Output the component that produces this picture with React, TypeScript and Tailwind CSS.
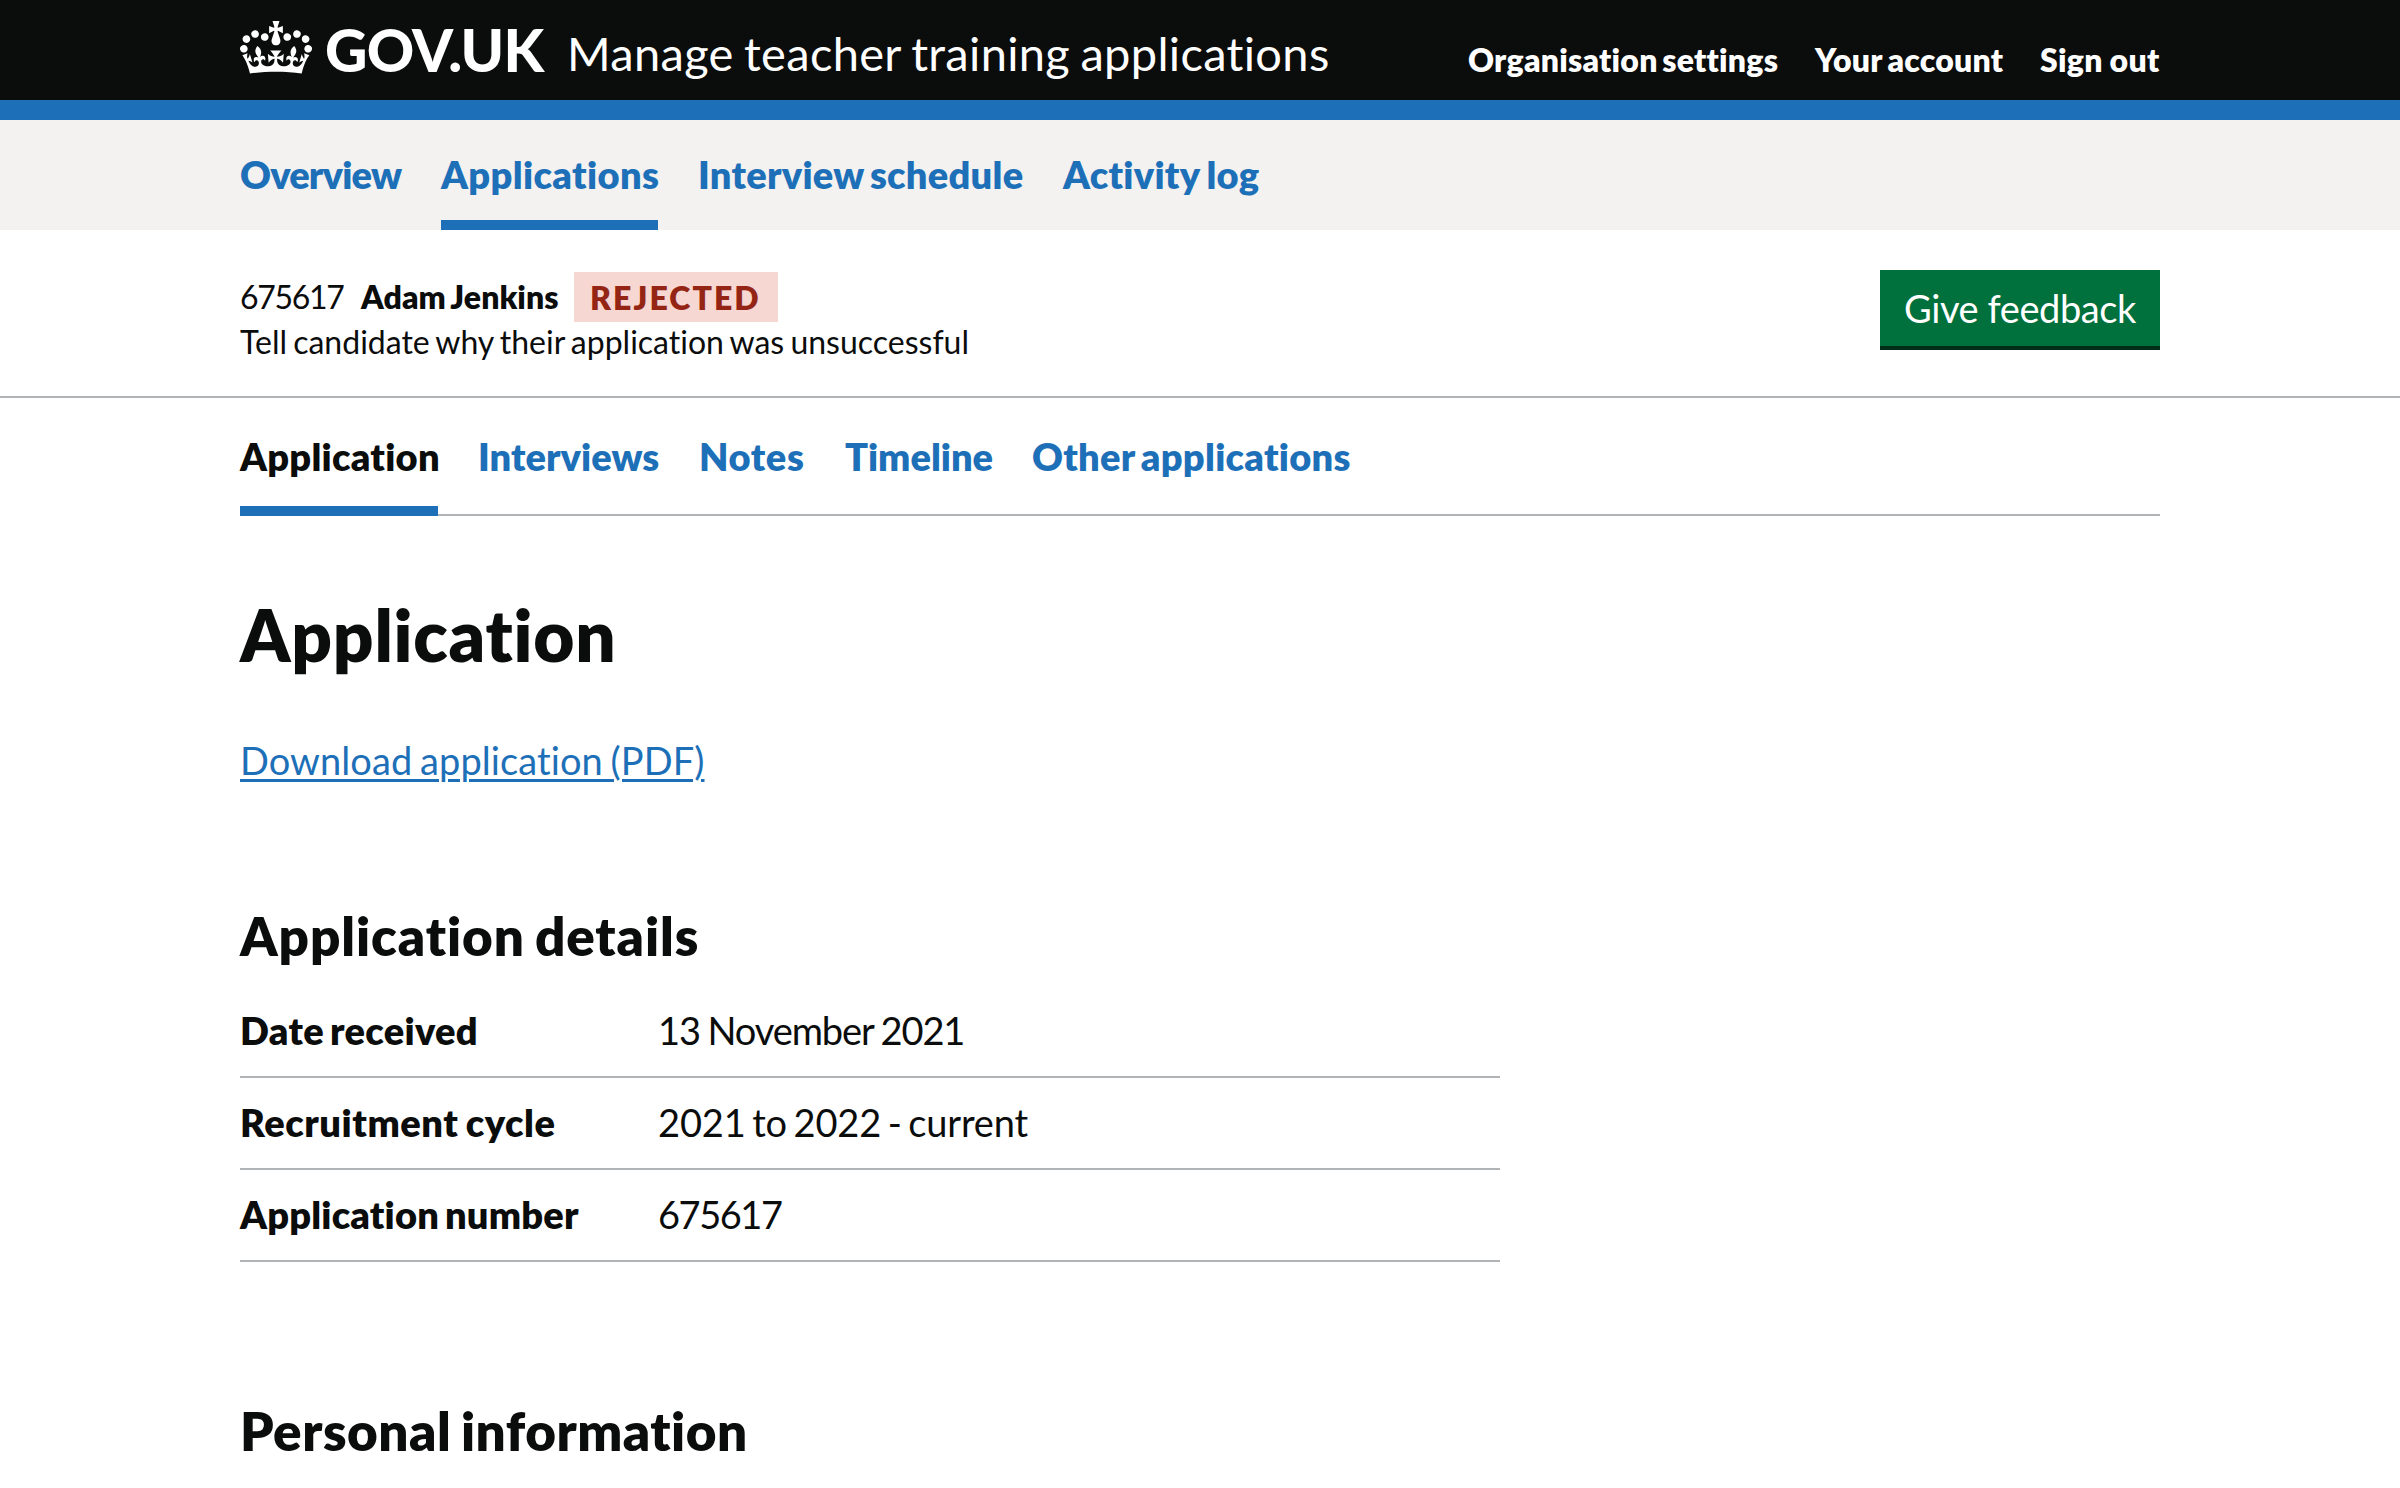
type NavItem = { label: string; style: string; active?: boolean };

const accountLinks: NavItem[] = [
  { label: "Organisation settings", style: "w-[310px] tracking-[0.24px] [word-spacing:-3px]" },
  { label: "Your account", style: "w-[188px] tracking-[0.2px] [word-spacing:-2px]" },
  { label: "Sign out", style: "w-[120px] tracking-[0.3px] [word-spacing:-1px]" },
];

const primaryLinks: NavItem[] = [
  { label: "Overview", style: "w-[161px] tracking-[-0.8px]" },
  { label: "Applications", style: "w-[217px] tracking-[0.35px]", active: true },
  { label: "Interview schedule", style: "w-[325px] tracking-[0.27px] [word-spacing:-3px]" },
  { label: "Activity log", style: "w-[196px] tracking-[0.25px] [word-spacing:-2px]" },
];

const tabs: NavItem[] = [
  { label: "Application", style: "w-[198px] tracking-[0.25px]", active: true },
  { label: "Interviews", style: "w-[181px] tracking-[0.05px]" },
  { label: "Notes", style: "w-[106px] tracking-[0.6px]" },
  { label: "Timeline", style: "w-[147px] tracking-[0px]" },
  { label: "Other applications", style: "w-[320px] tracking-[0.27px] [word-spacing:-3px]" },
];

const details = [
  { term: "Date received", termStyle: "tracking-[0.3px] [word-spacing:-3px]", value: "13 November 2021", valueStyle: "tracking-[-1.1px] [word-spacing:-1px]" },
  { term: "Recruitment cycle", termStyle: "tracking-[0.55px] [word-spacing:-2px]", value: "2021 to 2022 - current", valueStyle: "tracking-[-0.15px] [word-spacing:-3px]" },
  { term: "Application number", termStyle: "tracking-[0.18px] [word-spacing:-3px]", value: "675617", valueStyle: "tracking-[-1.45px]" },
];

function Crown() {
  return (
    <svg viewBox="0 0 132 97" className="h-[53px] w-[72px] shrink-0" fill="currentColor" aria-hidden="true">
      <path
        fillRule="evenodd"
        d="M25 30.2c3.5 1.5 7.7-.2 9.1-3.7 1.5-3.6-.2-7.8-3.9-9.2-3.6-1.4-7.6.3-9.1 3.9-1.4 3.5.3 7.5 3.9 9zM9 39.5c3.6 1.5 7.8-.2 9.2-3.7 1.5-3.6-.2-7.8-3.9-9.1-3.6-1.5-7.6.2-9.1 3.8-1.4 3.5.3 7.5 3.8 9zM4.4 57.2c3.5 1.5 7.7-.2 9.1-3.8 1.5-3.6-.2-7.7-3.9-9.1-3.5-1.5-7.6.3-9.1 3.8-1.4 3.5.3 7.6 3.9 9.1zm38.3-21.4c3.5 1.5 7.7-.2 9.1-3.8 1.5-3.6-.2-7.7-3.9-9.1-3.6-1.5-7.6.3-9.1 3.8-1.3 3.6.4 7.7 3.9 9.1zm64.4-5.6c-3.6 1.5-7.8-.2-9.1-3.7-1.5-3.6.2-7.8 3.8-9.2 3.6-1.4 7.7.3 9.2 3.9 1.3 3.5-.4 7.5-3.9 9zm15.9 9.3c-3.6 1.5-7.7-.2-9.1-3.7-1.5-3.6.2-7.8 3.7-9.1 3.6-1.5 7.7.2 9.2 3.8 1.5 3.5-.3 7.5-3.8 9zm4.7 17.7c-3.6 1.5-7.8-.2-9.2-3.8-1.5-3.6.2-7.7 3.9-9.1 3.6-1.5 7.7.3 9.2 3.8 1.3 3.5-.4 7.6-3.9 9.1zM89.3 35.8c-3.6 1.5-7.8-.2-9.2-3.8-1.4-3.6.2-7.7 3.9-9.1 3.6-1.5 7.7.3 9.2 3.8 1.4 3.6-.3 7.7-3.9 9.1zM69.7 17.7l8.9 4.7V9.3l-8.9 2.8c-.2-.3-.5-.6-.9-.9L72.4 0H59.6l3.5 11.2c-.3.3-.6.5-.9.9l-8.8-2.8v13.1l8.8-4.7c.3.3.6.7.9.9l-5 15.4v.1c-.2.8-.4 1.6-.4 2.4 0 4.1 3.1 7.5 7 8.1h.2c.3 0 .7.1 1 .1.4 0 .7 0 1-.1h.2c4-.6 7.1-4.1 7.1-8.1 0-.8-.1-1.7-.4-2.4V34l-5.1-15.4c.4-.2.7-.6 1-.9zM66 92.8c16.9 0 32.8 1.1 47.1 3.2 4-16.9 8.9-26.7 14-33.5l-9.6-3.4c1 4.9 1.1 7.2 0 10.2-1.5-1.4-3-4.3-4.2-8.7L108.6 76c2.8-2 5-3.2 7.5-3.3-4.4 9.4-10 11.9-13.6 11.2-4.3-.8-6.3-4.6-5.6-7.9 1-4.7 5.7-5.9 8-.5 4.3-8.7-3-11.4-7.6-8.8 7.1-7.2 7.9-13.5 2.1-21.1-8 6.1-8.1 12.3-4.5 20.8-4.7-5.4-12.1-2.5-9.5 6.2 3.4-5.2 7.9-2 7.2 3.1-.6 4.3-6.4 7.8-13.5 7.2-10.3-.9-10.9-8-11.2-13.8 2.5-.5 7.1 1.8 11 7.3L80.2 60c-4.1 4.4-8 5.3-12.3 5.4 1.4-4.4 8-11.6 8-11.6H55.5s6.4 7.2 7.9 11.6c-4.2-.1-8-1-12.3-5.4l1.4 16.4c3.9-5.5 8.5-7.7 10.9-7.3-.3 5.8-.9 12.8-11.1 13.8-7.2.6-12.9-2.9-13.5-7.2-.7-5 3.8-8.3 7.1-3.1 2.7-8.7-4.6-11.6-9.4-6.2 3.7-8.5 3.6-14.7-4.6-20.8-5.8 7.6-5 13.9 2.2 21.1-4.7-2.6-11.9.1-7.7 8.8 2.3-5.5 7.1-4.2 8.1.5.7 3.3-1.3 7.1-5.7 7.9-3.5.7-9-1.8-13.5-11.2 2.5.1 4.7 1.3 7.5 3.3l-4.7-15.4c-1.2 4.4-2.7 7.2-4.3 8.7-1.1-3-.9-5.3 0-10.2l-9.5 3.4c5 6.9 9.9 16.7 14 33.5 14.8-2.1 30.8-3.2 47.7-3.2z"
      />
    </svg>
  );
}

function Header() {
  return (
    <header className="h-[120px] border-b-[20px] border-[#1d70b8] bg-[#0b0c0c] text-white">
      <div className="mx-auto flex h-[100px] w-[1920px] items-start">
        <a className="flex pt-[21px]">
          <Crown />
          <span className="-mt-[2px] ml-[13px] w-[224px] text-[58.6px] leading-[60px] font-black tracking-[-0.75px]">GOV.UK</span>
        </a>
        <a className="mt-[23px] ml-[18px] text-[47px] leading-[60px] tracking-[0.32px] [word-spacing:-2px]">Manage teacher training applications</a>
        <nav className="mt-[40px] ml-auto flex gap-[37px] text-[32px] leading-[40px] font-extrabold">
          {accountLinks.map((l) => (
            <a key={l.label} className={l.style}>{l.label}</a>
          ))}
        </nav>
      </div>
    </header>
  );
}

function PrimaryNavigation() {
  return (
    <nav className="h-[110px] bg-[#f3f2f1]">
      <div className="mx-auto flex h-full w-[1920px] gap-[40px] text-[38px] leading-[50px] font-extrabold text-[#1d70b8]">
        {primaryLinks.map((l) => (
          <a key={l.label} className={`${l.style} border-b-[10px] pt-[29px] ${l.active ? "border-[#1d70b8]" : "border-transparent"}`}>
            {l.label}
          </a>
        ))}
      </div>
    </nav>
  );
}

function StatusBar() {
  return (
    <section className="h-[168px] border-b-2 border-[#b1b4b6]">
      <div className="mx-auto flex w-[1920px] items-start justify-between pt-[40px]">
        <div className="pt-[2px] text-[32px]">
          <div className="flex h-[50px] items-center leading-[52px]">
            <span className="w-[121px] tracking-[-1.3px]">675617</span>
            <span className="w-[213px] font-extrabold tracking-[0.05px] [word-spacing:-2px]">Adam Jenkins</span>
            <strong className="h-[50px] w-[204px] bg-[#f6d7d2] pl-[16px] font-extrabold tracking-[2.05px] text-[#942514]">REJECTED</strong>
          </div>
          <p className="leading-[40px] tracking-[0px] [font-variant-ligatures:none] [word-spacing:-2px]">Tell candidate why their application was unsuccessful</p>
        </div>
        <button className="h-[80px] w-[280px] border-b-4 border-[#002d18] bg-[#00703c] pb-[1px] text-[38px] leading-[50px] tracking-[-0.42px] text-white">
          Give feedback
        </button>
      </div>
    </section>
  );
}

function Tabs() {
  return (
    <nav className="mt-[32px] flex h-[86px] gap-[40px] text-[38px] leading-[52px] font-extrabold shadow-[inset_0_-2px_0_#b1b4b6]">
      {tabs.map((t) => (
        <a
          key={t.label}
          className={`${t.style} ${t.active ? "border-b-[10px] border-[#1d70b8] text-[#0b0c0c]" : "text-[#1d70b8]"}`}
        >
          {t.label}
        </a>
      ))}
    </nav>
  );
}

export default function App() {
  return (
    <div className="h-[1488px] w-[2400px] overflow-hidden bg-white font-[Lato,'Noto_Sans',sans-serif] whitespace-nowrap text-[#0b0c0c]">
      <Header />
      <PrimaryNavigation />
      <StatusBar />
      <main className="mx-auto w-[1920px]">
        <Tabs />
        <h1 className="mt-[79px] text-[71px] leading-[80px] font-extrabold tracking-[0.75px]">Application</h1>
        <p className="mt-[60px] text-[38px] leading-[50px] tracking-[0.08px] text-[#1d70b8] [word-spacing:-2px]">
          <a className="underline decoration-[3px] underline-offset-[4px]">Download application (PDF)</a>
        </p>
        <section className="mt-[121px] w-[1260px]">
          <h2 className="text-[53px] leading-[60px] font-extrabold tracking-[0.9px] [word-spacing:-3px]">Application details</h2>
          <dl className="mt-[20px] text-[38px] leading-[50px]">
            {details.map((d) => (
              <div key={d.term} className="flex h-[92px] border-b-2 border-[#b1b4b6] pt-[19px]">
                <dt className={`w-[418px] font-extrabold ${d.termStyle}`}>{d.term}</dt>
                <dd className={d.valueStyle}>{d.value}</dd>
              </div>
            ))}
          </dl>
        </section>
        <h2 className="mt-[139px] text-[53px] leading-[60px] font-extrabold tracking-[0.5px] [word-spacing:-3px]">Personal information</h2>
      </main>
    </div>
  );
}
